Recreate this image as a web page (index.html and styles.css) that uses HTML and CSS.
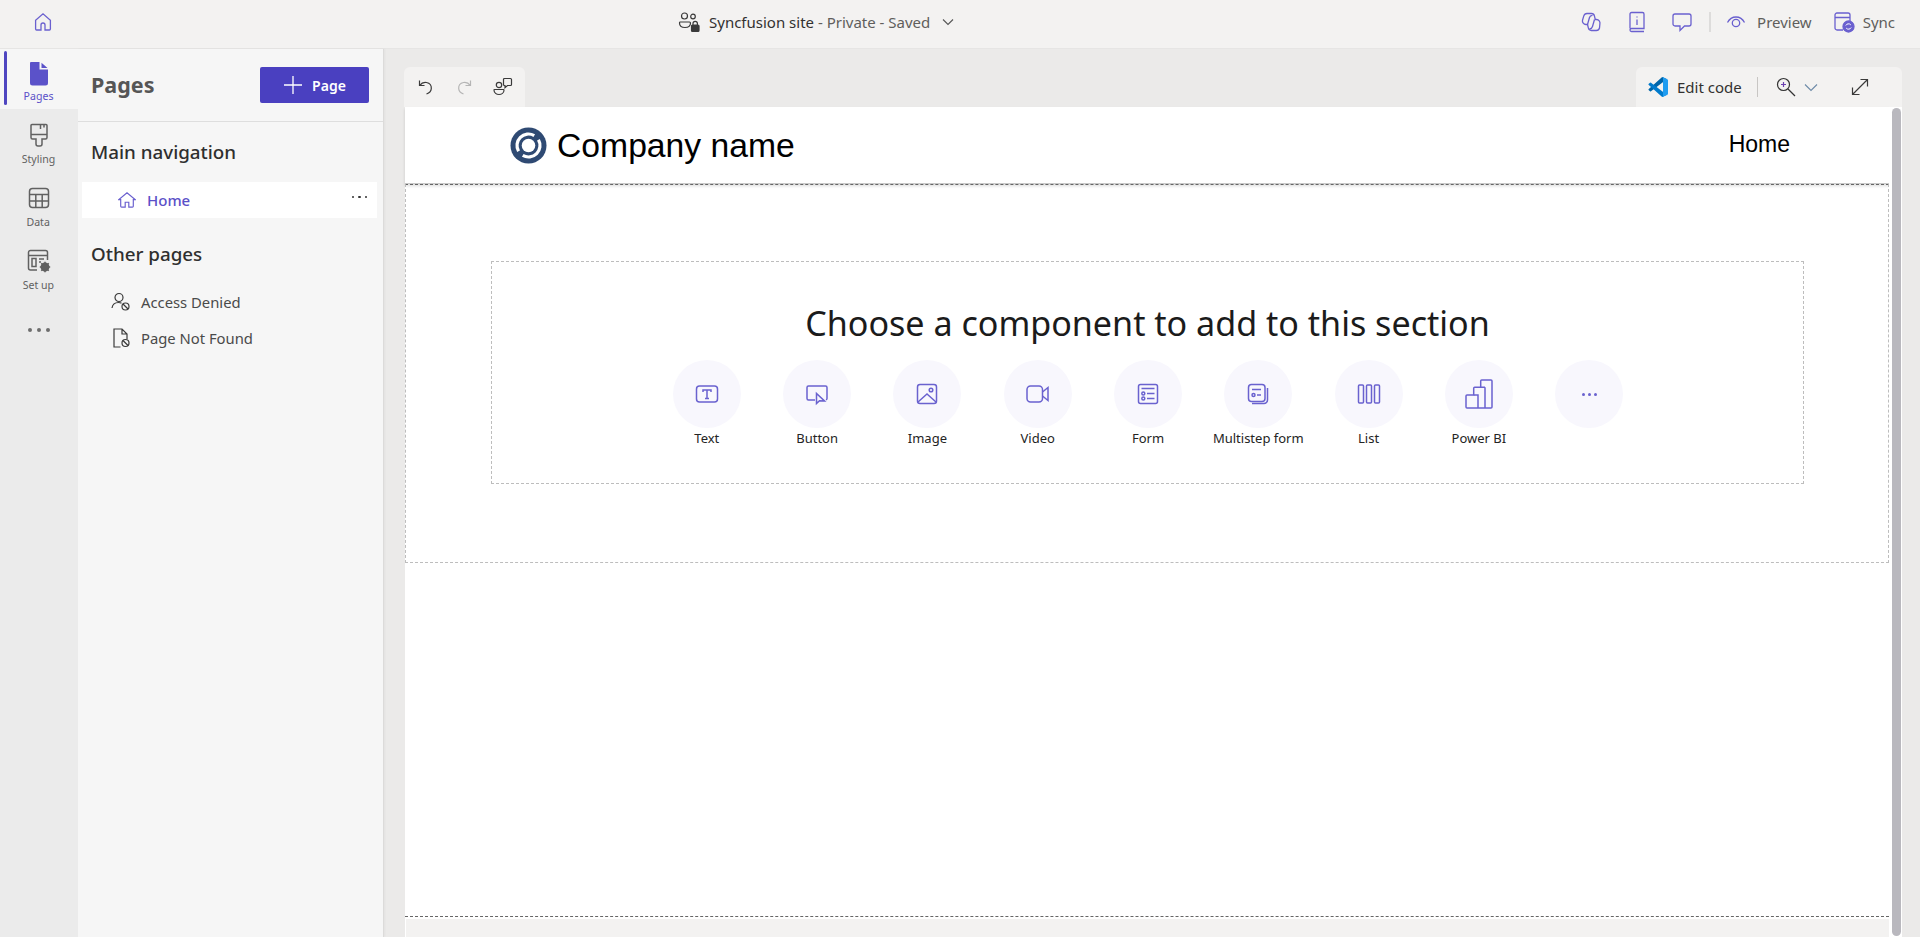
FILE: index.html
```html
<!DOCTYPE html>
<html lang="en">
<head>
<meta charset="utf-8">
<title>Syncfusion site - Pages</title>
<link rel="stylesheet" href="styles.css">
</head>
<body>
<header class="topbar">
  <button class="home-btn" aria-label="Home">
    <svg class="ic" width="20" height="20" viewBox="0 0 20 20"><path d="M8 18H3.600a1 1 0 0 1-1-1V8.200L10 1.800l7.400 6.400V17a1 1 0 0 1-1 1H12v-5a2 2 0 0 0-4 0z"/></svg>
  </button>
  <div class="site-info">
    <svg class="ic-dark" width="22" height="22" viewBox="0 0 22 22"><circle cx="6.500" cy="5" r="3"/><circle cx="15" cy="5.500" r="2.300"/><path d="M2 11h9.500a1 1 0 0 1 1 1c0 3-2.500 4.500-5.500 4.500s-5.500-1.500-5.500-4.500a1 1 0 0 1 .5-1z"/><rect class="fill" x="13.500" y="14" width="7.500" height="6.500" rx="1"/><path d="M15 14v-1.500a2.200 2.200 0 0 1 4.400 0V14"/></svg>
    <span class="site-name">Syncfusion site</span><span class="site-meta">&nbsp;- Private - Saved</span>
    <svg class="chev" width="14" height="14" viewBox="0 0 14 14"><path d="M2 4.500l5 5 5-5"/></svg>
  </div>
  <div class="top-actions">
    <svg class="ic" width="22" height="22" viewBox="0 0 22 22"><path d="M7 2.500h4.500a3 3 0 0 1 2.900 2.300l.9 3.700h1.200a3.500 3.500 0 0 1 3.400 4.300L19.500 17a3.300 3.300 0 0 1-3.200 2.500h-5a3 3 0 0 1-2.900-2.300l-.9-3.700H6A3.500 3.500 0 0 1 2.500 9.200l1.300-4.300A3.400 3.400 0 0 1 7 2.500z"/><path d="M7.500 13.500l2-7a3 3 0 0 1 3-2.200M14.500 8.500l-2 7a3.500 3.500 0 0 1-3 2.500"/></svg>
    <svg class="ic book" width="20" height="22" viewBox="0 0 20 22"><path d="M3 17.500V3a1.500 1.500 0 0 1 1.500-1.500h11A1.500 1.500 0 0 1 17 3v14.500H4.500A1.500 1.500 0 0 0 3 19a1.500 1.500 0 0 0 1.500 1.500H17"/><path d="M10 8.500v5.500M10 5.500v1"/></svg>
    <svg class="ic chat" width="22" height="22" viewBox="0 0 22 22"><path d="M4 3h14a2 2 0 0 1 2 2v8a2 2 0 0 1-2 2h-4.500L9 19.500V15H4a2 2 0 0 1-2-2V5a2 2 0 0 1 2-2z"/></svg>
    <span class="vsep"></span>
    <button class="top-btn">
      <svg class="ic" width="22" height="18" viewBox="0 0 22 18"><path d="M2.500 9.500c2-3.800 5-5.500 8.500-5.500s6.500 1.700 8.500 5.500"/><circle cx="11" cy="10" r="3.700"/></svg>
      <span>Preview</span>
    </button>
    <button class="top-btn sync">
      <svg class="ic" width="22" height="22" viewBox="0 0 22 22"><path d="M10 19H4a2 2 0 0 1-2-2V4a2 2 0 0 1 2-2h11a2 2 0 0 1 2 2v6M2 6.500h15"/><circle class="ink" cx="15.500" cy="15.500" r="5.500"/><path class="rev" d="M12.800 14.500a3 3 0 0 1 5-.6M18.200 16.500a3 3 0 0 1-5 .6"/></svg>
      <span>Sync</span>
    </button>
  </div>
</header>

<div class="workspace">
  <nav class="rail">
    <a class="rail-item active">
      <svg width="20" height="24" viewBox="0 0 20 24"><path class="solid" d="M2 0h8.500v7.500H19V21a2.500 2.500 0 0 1-2.500 2.500h-13A2.500 2.500 0 0 1 1 21V1a1 1 0 0 1 1-1zM12.500 .8L18.500 6h-6z"/></svg>
      <span>Pages</span>
    </a>
    <a class="rail-item">
      <svg class="grey" width="20" height="24" viewBox="0 0 20 24"><path d="M3 1.500h14a1 1 0 0 1 1 1v12a1.500 1.500 0 0 1-1.500 1.500H13v5a2 2 0 0 1-2 2H9a2 2 0 0 1-2-2v-5H3.500A1.500 1.500 0 0 1 2 14.500v-12a1 1 0 0 1 1-1zM2 11.500h16M11.500 2v4M15 2v2.500"/></svg>
      <span>Styling</span>
    </a>
    <a class="rail-item">
      <svg class="grey" width="22" height="22" viewBox="0 0 22 22"><rect x="1.500" y="1.500" width="19" height="19" rx="3"/><path d="M1.500 7.500h19M1.500 14h19M7.800 7.500v13M14.200 7.500v13"/></svg>
      <span>Data</span>
    </a>
    <a class="rail-item">
      <svg class="grey" width="24" height="24" viewBox="0 0 24 24"><path d="M10 21H3.500a2 2 0 0 1-2-2V3.500a2 2 0 0 1 2-2h15a2 2 0 0 1 2 2V11M1.500 6.500h19"/><rect x="5" y="9.500" width="4" height="8"/><path d="M12 10h5M12 13h2"/><circle class="cog" cx="18" cy="18" r="3.700"/><circle class="hole" cx="18" cy="18" r="1.200"/><path class="teeth" d="M18 12.800v10.400M12.800 18h10.400M14.300 14.300l7.400 7.400M21.700 14.300l-7.400 7.400"/></svg>
      <span>Set up</span>
    </a>
    <a class="rail-more" aria-label="More"><i></i><i></i><i></i></a>
  </nav>

  <aside class="panel">
    <div class="panel-head">
      <h1>Pages</h1>
      <button class="add-page">
        <svg width="20" height="20" viewBox="0 0 20 20"><path d="M10 1v18M1 10h18"/></svg>
        <span>Page</span>
      </button>
    </div>
    <section class="group">
      <h2>Main navigation</h2>
      <div class="page-row selected">
        <svg class="ic" width="18" height="18" viewBox="0 0 20 20"><path d="M8 18H4a1 1 0 0 1-1-1V9.500H1L10 2l9 7.500h-2V17a1 1 0 0 1-1 1h-4v-5.500H8z"/></svg>
        <span>Home</span>
        <span class="row-more"><i></i><i></i><i></i></span>
      </div>
    </section>
    <section class="group other">
      <h2>Other pages</h2>
      <div class="page-row plain">
        <svg class="ic-dark" width="20" height="20" viewBox="0 0 20 20"><circle cx="8" cy="5.500" r="4"/><path d="M1 16c.5-3.500 3-5.500 6.500-5.500 1 0 2 .2 3 .6"/><circle cx="14.500" cy="14.500" r="3.500"/><path d="M12 12l5 5"/></svg>
        <span>Access Denied</span>
      </div>
      <div class="page-row plain">
        <svg class="ic-dark" width="20" height="20" viewBox="0 0 20 20"><path d="M9.500 19H3V1h8l5 5v5M11 1v5h5"/><circle cx="14.500" cy="15" r="3.500"/><path d="M12 12.500l5 5"/></svg>
        <span>Page Not Found</span>
      </div>
    </section>
  </aside>

  <main class="stage">
    <div class="stage-tools">
      <div class="tool-tab left">
        <svg class="ic-dark" width="18" height="18" viewBox="0 0 18 18"><path d="M2.500 2.500v5h5M2.800 7.300C4.500 5 7 4 9.500 4.500c3 .6 5 3 4.800 6-.1 2.300-2 4.500-4.800 5.500"/></svg>
        <svg class="ic-off" width="18" height="18" viewBox="0 0 18 18"><path d="M15.500 2.500v5h-5M15.200 7.300C13.500 5 11 4 8.500 4.500c-3 .6-5 3-4.800 6 .1 2.300 2 4.500 4.800 5.500"/></svg>
        <svg class="ic-dark" width="20" height="20" viewBox="0 0 20 20"><circle cx="6" cy="8" r="2.700"/><path d="M1.500 12.500h9a.5.500 0 0 1 .5.500c0 3-2.500 4.500-5 4.500S1 16 1 13a.5.500 0 0 1 .5-.5z"/><path d="M11.500 1.500h6a1 1 0 0 1 1 1v5a1 1 0 0 1-1 1h-3l-2.500 2.200V8.500h-.5a1 1 0 0 1-1-1v-5a1 1 0 0 1 1-1z"/></svg>
      </div>
      <div class="tool-tab right">
        <svg width="20" height="20" viewBox="0 0 100 100"><path fill="#0065A9" d="M96 11 75 1a6 6 0 0 0-7 1L4 60a4 4 0 0 0 0 6l6 5a4 4 0 0 0 5 0L97 9z"/><path fill="#007ACC" d="M96 89 75 99a6 6 0 0 1-7-1L4 40a4 4 0 0 1 0-6l6-5a4 4 0 0 1 5 0l82 62z"/><path fill="#1F9CF0" d="M75 99a6 6 0 0 1-7-1c2.500 2.500 7 .7 7-2.800V4.800c0-3.500-4.500-5.300-7-2.800a6 6 0 0 1 7-1l21 10a6 6 0 0 1 4 5.500v67a6 6 0 0 1-4 5.500z"/></svg>
        <span class="edit">Edit code</span>
        <span class="tool-sep"></span>
        <svg class="zoom-ic" width="20" height="20" viewBox="0 0 20 20"><circle cx="7.500" cy="7.500" r="6"/><path class="pl" d="M7.500 5v5M5 7.500h5"/><path d="M12 12l7 7"/></svg>
        <svg class="chev blue" width="14" height="14" viewBox="0 0 14 14"><path d="M1 4.500l6 6 6-6"/></svg>
        <svg class="ic-dark expand" width="18" height="18" viewBox="0 0 18 18"><path d="M1.500 16.500l15-15M9.500 1.500h7v7M1.500 9.500v7h7"/></svg>
      </div>
    </div>
    <div class="frame">
      <div class="canvas">
        <div class="site-head">
          <svg class="logo" width="37" height="37" viewBox="0 0 37 37"><circle cx="18.500" cy="18.500" r="18" fill="#2f4a73"/><circle cx="18.500" cy="18.500" r="6.800" fill="#fff"/><path d="M8.540 24.250A11.500 11.500 0 0 1 24.250 8.540M28.460 12.750A11.500 11.500 0 0 1 12.750 28.460" fill="none" stroke="#fff" stroke-width="3.200"/></svg>
          <span class="brand">Company name</span>
          <span class="site-link">Home</span>
        </div>
        <section class="drop-section">
          <div class="chooser">
            <h3>Choose a component to add to this section</h3>
            <ul class="components">
              <li><span class="disc"><svg width="24" height="24" viewBox="0 0 24 24"><rect x="1.500" y="4" width="21" height="16" rx="3"/><path d="M8 10V8h8v2M12 8v8.500M10 16.500h4"/></svg></span><span>Text</span></li>
              <li><span class="disc"><svg width="24" height="24" viewBox="0 0 24 24"><path d="M10 18H3.500a1.500 1.500 0 0 1-1.500-1.500v-11A1.500 1.500 0 0 1 3.500 4h17A1.500 1.500 0 0 1 22 5.500v11a1.500 1.500 0 0 1-1 1.400"/><path d="M11.500 11.500v10l3-2.800 5 .3z"/></svg></span><span>Button</span></li>
              <li><span class="disc"><svg width="24" height="24" viewBox="0 0 24 24"><rect x="2.500" y="2.500" width="19" height="19" rx="2.500"/><circle cx="16" cy="8" r="1.800"/><path d="M3 20l9-8 9 8"/></svg></span><span>Image</span></li>
              <li><span class="disc"><svg width="24" height="24" viewBox="0 0 24 24"><rect x="1" y="4" width="15.500" height="16" rx="3.500"/><path d="M16.500 10L22 5.500v13L16.500 14"/></svg></span><span>Video</span></li>
              <li><span class="disc"><svg width="24" height="24" viewBox="0 0 24 24"><rect x="2.500" y="2.500" width="19" height="19" rx="2"/><path d="M5.500 6.500h13M11 11.500h7.500M11 16.500h7.500"/><circle cx="7.300" cy="11.500" r="1.500"/><circle cx="7.300" cy="16.500" r="1.500"/></svg></span><span>Form</span></li>
              <li><span class="disc"><svg width="24" height="24" viewBox="0 0 24 24"><rect x="2.500" y="2.500" width="16.500" height="17" rx="3"/><path d="M21.500 6v12a3.500 3.500 0 0 1-3.500 3.500H6"/><path d="M6 7.500h9M11 13h4"/><circle cx="7.500" cy="13" r="1.500"/></svg></span><span>Multistep form</span></li>
              <li><span class="disc"><svg width="24" height="24" viewBox="0 0 24 24"><rect x="1.500" y="3" width="5" height="18" rx="1"/><rect x="9.500" y="3" width="5" height="18" rx="1"/><rect x="17.500" y="3" width="5" height="18" rx="1"/></svg></span><span>List</span></li>
              <li><span class="disc"><svg width="28" height="30" viewBox="0 0 28 30"><path d="M1 17a1 1 0 0 1 1-1h6.700V9.300a1 1 0 0 1 1-1h6V2a1 1 0 0 1 1-1h9.300a1 1 0 0 1 1 1v26a1 1 0 0 1-1 1H2a1 1 0 0 1-1-1z"/><path d="M8.700 16H13v13M20 8.300V29M15.700 8.300H20"/></svg></span><span>Power BI</span></li>
              <li><span class="disc dots"><i></i><i></i><i></i></span><span class="blank"></span></li>
            </ul>
          </div>
        </section>
        <div class="empty-space"></div>
        <div class="site-foot"></div>
      </div>
      <div class="scrollbar"><span></span></div>
    </div>
  </main>
</div>
</body>
</html>
```
FILE: styles.css
```css
* { box-sizing: border-box; }
html, body { margin: 0; height: 100%; overflow: hidden; }
body {
  display: flex;
  flex-direction: column;
  height: 937px;
  background: #ebeae9;
  font-family: "Noto Sans", "Open Sans", sans-serif;
  color: #242424;
}
button { font: inherit; border: 0; background: none; padding: 0; }
svg { display: block; flex: none; fill: none; }
h1, h2, h3, ul { margin: 0; padding: 0; }

.ic path, .ic circle, .ic rect { stroke: #6a60cf; stroke-width: 1.300; }
.ic-dark path, .ic-dark circle, .ic-dark rect { stroke: #3a3a3a; stroke-width: 1.200; }
.ic-off path { stroke: #b5b5b5; stroke-width: 1.200; }

.topbar {
  height: 49px;
  flex: none;
  display: grid;
  grid-template-columns: 678px 1fr auto;
  align-items: center;
  padding-bottom: 4px;
  background: #f3f2f1;
  border-bottom: 1px solid #e6e5e4;
}
.home-btn { justify-self: start; margin-left: 33px; }
.site-info { display: flex; align-items: center; font-size: 15px; justify-self: start; }
.site-info .ic-dark { margin-right: 9px; }
.site-info .ic-dark .fill { fill: #3a3a3a; }
.site-name { color: #323130; }
.site-meta { color: #605e5c; }
.chev { margin-left: 11px; }
.chev path { stroke: #555; stroke-width: 1.100; }
.chev.blue { margin-left: 8px; }
.chev.blue path { stroke: #6d8aa8; }

.top-actions {
  justify-self: end;
  display: flex;
  align-items: center;
  padding-right: 25px;
  color: #605e5c;
  font-size: 15px;
}
.book { margin-left: 25px; }
.chat { margin-left: 24px; }
.vsep { width: 2px; height: 20px; background: #dddcdb; margin: 0 14px 0 16px; }
.top-btn { display: flex; align-items: center; gap: 10px; color: #605e5c; }
.top-btn.sync { margin-left: 21px; gap: 8px; }
.top-btn.sync .ink { fill: #6a60cf; }
.top-btn.sync .rev { stroke: #fff; stroke-width: 1; }

.workspace { flex: 1; display: flex; min-height: 0; }

.rail {
  width: 78px;
  flex: none;
  background: #ebebeb;
  display: flex;
  flex-direction: column;
}
.rail-item {
  height: 63px;
  display: flex;
  flex-direction: column;
  align-items: center;
  justify-content: flex-start;
  padding: 14px 1px 0 0;
  gap: 5px;
  font-size: 11px;
  line-height: 14px;
  color: #616161;
}
.rail-item svg { height: 24px; }
.rail-item span { transform: scaleX(.96); }
.rail-item.active {
  height: 60px;
  background: #f6f6f6;
  color: #5b50c8;
  position: relative;
  padding-top: 13px;
  gap: 3px;
}
.rail-item.active::before {
  content: "";
  position: absolute;
  left: 4px;
  top: 2px;
  bottom: 4px;
  width: 3px;
  border-radius: 2px;
  background: #4f46c0;
}
.solid { fill: #5b52c9; }
.grey path, .grey rect, .grey circle { stroke: #616161; stroke-width: 1.500; }
.grey .cog { fill: #616161; }
.grey .hole { fill: #ebebeb; stroke: none; }
.grey .teeth { stroke-width: 1.500; }
.rail-more { display: flex; justify-content: center; gap: 5px; margin-top: 30px; padding-right: 1px; }
.rail-more i, .row-more i, .dots i { display: block; width: 3px; height: 3px; border-radius: 50%; }
.rail-more i { width: 4px; height: 4px; background: #6e6e6e; }

.panel {
  width: 306px;
  flex: none;
  background: #f6f6f6;
  border-right: 1px solid #dcdbda;
  box-shadow: 1px 0 2px rgba(0, 0, 0, .04);
  display: flex;
  flex-direction: column;
}
.panel-head {
  height: 73px;
  flex: none;
  display: flex;
  align-items: center;
  justify-content: space-between;
  padding: 0 14px 0 13px;
  border-bottom: 1px solid #dedede;
}
.panel-head h1 { font-size: 21.500px; font-weight: 700; color: #565656; margin-bottom: 2px; }
.add-page {
  width: 109px;
  height: 36px;
  display: flex;
  align-items: center;
  justify-content: center;
  gap: 9px;
  background: #4a40c0;
  color: #fff;
  border-radius: 2px;
  font-weight: 600;
  font-size: 14px;
}
.add-page path { stroke: #fff; stroke-width: 1.300; }
.group h2 { font-size: 18.800px; font-weight: 500; line-height: 24px; color: #2f2f2f; padding-left: 13px; }
.group { padding-top: 18px; }
.group.other { padding-top: 24px; }
.group.other h2 { margin-bottom: 18px; }
.group:first-of-type h2 { margin-bottom: 18px; }
.page-row { height: 36px; display: flex; align-items: center; font-size: 14.800px; }
.page-row.selected {
  margin: 0 6px 0 4px;
  background: #fff;
  padding-left: 36px;
  color: #5b50c8;
  font-weight: 500;
  gap: 11px;
  font-size: 15px;
}
.row-more { margin-left: auto; margin-right: 10px; display: flex; gap: 4px; transform: translateY(-3px); }
.row-more i { background: #333; width: 2.500px; height: 2.500px; }
.page-row.plain { padding-left: 33px; gap: 10px; color: #4a4a4a; }

.stage { flex: 1; min-width: 0; display: flex; flex-direction: column; padding: 18px 18px 0 20px; }
.stage-tools { display: flex; justify-content: space-between; height: 40px; flex: none; }
.tool-tab {
  display: flex;
  align-items: center;
  background: #f3f2f1;
  border-radius: 6px 6px 0 0;
  height: 40px;
}
.tool-tab.left { width: 121px; padding: 0 12px 0 13px; justify-content: space-between; }
.tool-tab.right { width: 266px; padding: 0 0 0 12px; font-size: 15px; color: #323130; }
.edit { margin-left: 9px; }
.tool-sep { width: 1px; height: 20px; background: #c8c6c4; margin: 0 18px 0 15px; }
.zoom-ic circle, .zoom-ic > path { stroke: #333; stroke-width: 1.200; }
.zoom-ic .pl { stroke: #6a3fb0; }
.expand { margin-left: 33px; }

.frame { flex: 1; min-height: 0; display: flex; margin-left: 1px; }
.canvas {
  flex: 1;
  min-width: 0;
  display: flex;
  flex-direction: column;
  background: #fff;
  font-family: "Liberation Sans", Arial, sans-serif;
  color: #000;
}
.site-head {
  height: 77px;
  flex: none;
  display: flex;
  align-items: center;
  padding: 0 99px 0 105px;
  box-shadow: 0 2px 3px rgba(0, 0, 0, .14);
  border-bottom: 1px solid #c9c9c9;
}
.brand { font-size: 33.700px; margin-left: 10px; }
.site-link { margin-left: auto; font-size: 23px; transform: translateY(-1px); }
.drop-section {
  height: 379px;
  flex: none;
  border: 1px dashed #bdbdbd;
  border-top: 1px dashed #666;
  padding: 76px 84px 0 85px;
}
.chooser {
  height: 223px;
  border: 1px dashed #bdbdbd;
  font-family: "Noto Sans", sans-serif;
}
.chooser h3 { font-size: 34.100px; font-weight: 400; line-height: 48px; text-align: center; padding-top: 37px; height: 85px; color: #1b1b1b; }
.components { list-style: none; display: flex; justify-content: center; margin-top: 13px; padding-left: 1px; }
.components li {
  width: 110.300px;
  display: flex;
  flex-direction: column;
  align-items: center;
  gap: 1px;
  font-size: 13px;
  line-height: 18px;
  color: #242424;
  white-space: nowrap;
}
.disc {
  width: 68px;
  height: 68px;
  border-radius: 50%;
  background: #f8f7fd;
  display: flex;
  align-items: center;
  justify-content: center;
}
.disc svg path, .disc svg rect, .disc svg circle { stroke: #6a62cf; stroke-width: 1.500; }
.dots { gap: 3px; }
.dots i { background: #6a62cf; }
.blank { height: 18px; }
.empty-space { flex: 1; border-bottom: 1px dashed #666; }
.site-foot { height: 18px; flex: none; background: #f3f2f1; margin: 2px 0 0 1px; }
.scrollbar { width: 13px; flex: none; background: #fff; padding: 1px 1px 1px 3px; }
.scrollbar span { display: block; height: 100%; background: #b9b8be; border-radius: 5px; }
```
